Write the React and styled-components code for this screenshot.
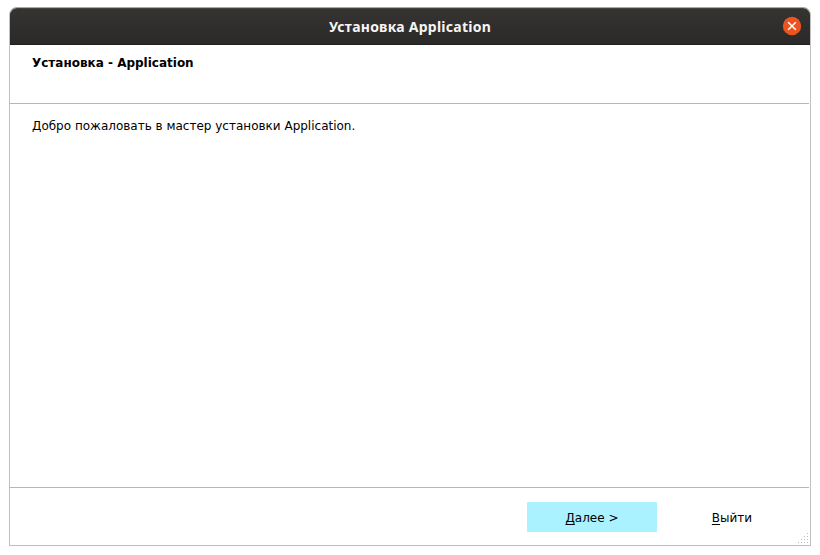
import React from 'react';
import styled, { createGlobalStyle } from 'styled-components';

const GlobalStyle = createGlobalStyle`
  * { box-sizing: border-box; }
  body { margin: 0; background: #fff; color: #000; font-family: "DejaVu Sans", sans-serif; font-size: 12px; }
`;
const Desktop = styled.main`
  width: 820px; height: 555px; padding: 7px 9px 9px; overflow: hidden;
`;
const Window = styled.section`
  width: 802px; height: 539px; display: flex; flex-direction: column;
  border: 1px solid #c0c0c0; border-top-color: #a8a8a8; border-radius: 8px 8px 0 0; position: relative;
`;
const TitleBar = styled.header`
  height: 37px; flex: none; display: grid;
  grid-template-columns: 1fr auto 1fr; align-items: center;
  border-radius: 7px 7px 0 0; border-top: 1px solid #42413e; border-bottom: 1px solid #1f1d1d;
  background: linear-gradient(#353431, #2b2929); color: #f6f5f3;
`;
const WindowTitle = styled.h1`
  grid-column: 2; margin: 0; font: 700 14px/20px "Noto Sans", sans-serif; letter-spacing: 0.25px; white-space: nowrap;
`;
const CloseButton = styled.button`
  justify-self: end; width: 19px; height: 19px; margin-right: 8px; padding: 0; border: 0; background: none;
  svg { display: block; overflow: visible; }
`;
const PageHeader = styled.div`
  height: 59px; flex: none; margin-right: 1px; padding: 10px 22px; border-bottom: 1px solid #b6b6b6;
`;
const Heading = styled.h2`
  margin: 0; font-size: 12px; line-height: 16px; font-weight: bold;
`;
const Content = styled.div`
  flex: 1; padding: 14px 22px; line-height: 16px;
`;
const Footer = styled.footer`
  height: 58px; flex: none; display: flex; justify-content: flex-end; gap: 10px; margin-right: 1px; padding: 14px 12px;
  border-top: 1px solid #b6b6b6;
`;
const Button = styled.button`
  width: 130px; height: 30px; border: 0; border-radius: 1px; padding: 2px 0 0; font: inherit; color: #000;
  background: ${({ $primary }) => ($primary ? '#aaf2ff' : 'transparent')};
`;
const Mnemonic = styled.span`
  text-decoration: underline; text-underline-offset: 2px; text-decoration-thickness: 1px; text-decoration-skip-ink: none;
`;
const Grip = styled.svg`
  position: absolute; right: 2px; bottom: 2px;
`;
const dots = [[9,0],[6,3],[9,3],[3,6],[6,6],[9,6],[0,9],[3,9],[6,9],[9,9]];

export default function App() {
  return (
    <Desktop>
      <GlobalStyle />
      <Window>
        <TitleBar>
          <WindowTitle>Установка Application</WindowTitle>
          <CloseButton aria-label="Закрыть">
            <svg width="19" height="19" viewBox="0 0 19 19">
              <circle cx="9" cy="9" r="9.2" fill="#e95420" />
              <path d="M5.2 5.2l7.6 7.6M12.8 5.2l-7.6 7.6" stroke="#fff" strokeWidth="1.5" />
            </svg>
          </CloseButton>
        </TitleBar>
        <PageHeader><Heading>Установка - Application</Heading></PageHeader>
        <Content>Добро пожаловать в мастер установки Application.</Content>
        <Footer>
          <Button $primary><Mnemonic>Д</Mnemonic>алее &gt;</Button>
          <Button><Mnemonic>В</Mnemonic>ыйти</Button>
        </Footer>
        <Grip width="10" height="10" viewBox="0 0 10 10">
          {dots.map(([x, y]) => <rect key={`${x}-${y}`} x={x} y={y} width="1" height="1" fill="#bdbdbd" />)}
        </Grip>
      </Window>
    </Desktop>
  );
}
